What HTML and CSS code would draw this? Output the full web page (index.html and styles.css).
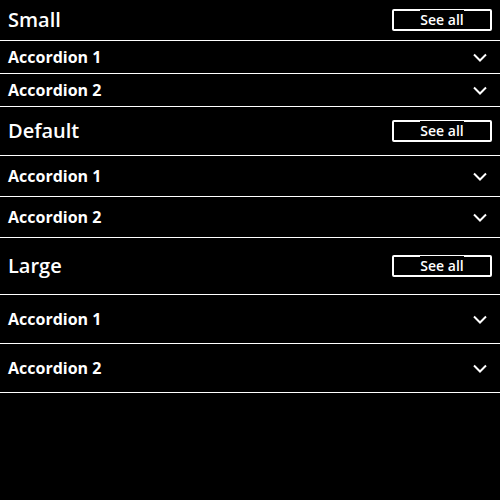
FILE: index.html
```html
<!DOCTYPE html>
<html>
<head>
<meta charset="utf-8">
<link rel="stylesheet" href="styles.css">
</head>
<body>
<section class="group sm">
  <div class="head"><h2>Small</h2><button class="see"><span>See all</span></button></div>
  <div class="row"><span>Accordion 1</span><svg class="chev" viewBox="0 0 24 24"><path d="M6 9.5l6 6 6-6"/></svg></div>
  <div class="row"><span>Accordion 2</span><svg class="chev" viewBox="0 0 24 24"><path d="M6 9.5l6 6 6-6"/></svg></div>
</section>
<section class="group md">
  <div class="head"><h2>Default</h2><button class="see"><span>See all</span></button></div>
  <div class="row"><span>Accordion 1</span><svg class="chev" viewBox="0 0 24 24"><path d="M6 9.5l6 6 6-6"/></svg></div>
  <div class="row"><span>Accordion 2</span><svg class="chev" viewBox="0 0 24 24"><path d="M6 9.5l6 6 6-6"/></svg></div>
</section>
<section class="group lg">
  <div class="head"><h2>Large</h2><button class="see"><span>See all</span></button></div>
  <div class="row"><span>Accordion 1</span><svg class="chev" viewBox="0 0 24 24"><path d="M6 9.5l6 6 6-6"/></svg></div>
  <div class="row"><span>Accordion 2</span><svg class="chev" viewBox="0 0 24 24"><path d="M6 9.5l6 6 6-6"/></svg></div>
</section>
</body>
</html>
```
FILE: styles.css
```css
html, body {
  margin: 0;
  padding: 0;
  background: #000;
  color: #fff;
  font-family: "Open Sans", "Liberation Sans", sans-serif;
}
.group { display: flex; flex-direction: column; }
.head {
  display: flex;
  align-items: center;
  justify-content: space-between;
  padding: 0 8px;
  border-bottom: 1px solid #fff;
}
.head h2 {
  margin: 0;
  font-family: "Open Sans", sans-serif;
  font-size: 20px;
  font-weight: 600;
  line-height: 24px;
}
.see {
  display: block;
  width: 100px;
  height: 22px;
  box-sizing: border-box;
  border: 2px solid #fff;
  border-radius: 2px;
  background: #000;
  color: #fff;
  font-family: "Open Sans", sans-serif;
  font-size: 14px;
  font-weight: 600;
  line-height: 16px;
  padding: 0;
  text-align: center;
}
.see span {
  background: #000;
}
.row {
  display: flex;
  align-items: center;
  justify-content: space-between;
  padding: 0 8px;
  border-bottom: 1px solid #fff;
  font-size: 16px;
  font-weight: 700;
}
.chev {
  width: 24px;
  height: 24px;
  fill: none;
  stroke: #fff;
  stroke-width: 2;
}
.sm .head { height: 40px; }
.sm .row { height: 32px; }
.md .head { height: 48px; }
.md .row { height: 40px; }
.lg .head { height: 56px; }
.lg .row { height: 48px; }
```
